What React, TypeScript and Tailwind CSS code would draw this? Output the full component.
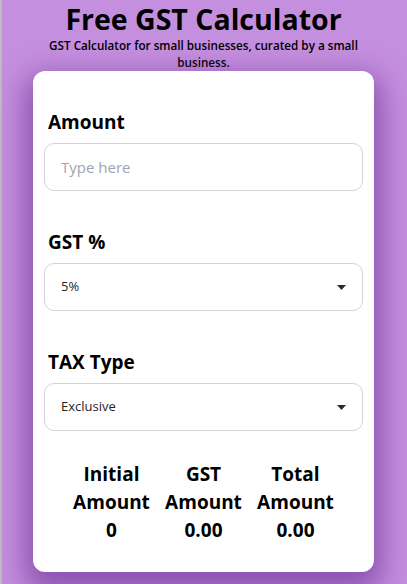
import { useState } from 'react';

// ── Small pieces ─────────────────────────────────────────────────────────────

function Caret() {
    return (
        <svg width="9" height="5" viewBox="0 0 9 5" className="flex-shrink-0">
            <path d="M0 0h9L4.5 5z" fill="#2b2b33" />
        </svg>
    );
}

function Field({ label, children }: { label: string; children: React.ReactNode }) {
    return (
        <div className="flex flex-col">
            <label className="pl-1 text-[19px] font-bold leading-[28px] text-black">{label}</label>
            <div className="mt-[7px]">{children}</div>
        </div>
    );
}

function SelectBox({ value }: { value: string }) {
    return (
        <div className="flex h-[48px] items-center justify-between rounded-[10px] border border-[#d4d4d8] pl-[16px] pr-[16px] text-[13px] text-[#1f1f1f]">
            <span>{value}</span>
            <Caret />
        </div>
    );
}

function Result({ top, value }: { top: string; value: string }) {
    return (
        <div className="flex flex-col items-center text-[19px] font-bold leading-[28px] text-black">
            <span>{top}</span>
            <span>Amount</span>
            <span>{value}</span>
        </div>
    );
}

// ── Page ─────────────────────────────────────────────────────────────────────

export default function App() {
    const [amount, setAmount] = useState('');

    return (
        <div
            className="flex min-h-[584px] flex-col items-center bg-[#c58fdf] pb-[14px] shadow-[inset_2px_0_0_#bdbdbd]"
            style={{ fontFamily: '"Open Sans", "Noto Sans", sans-serif' }}
        >
            <h1 className="mt-[1px] text-[28.5px] font-bold leading-[36px] text-black">Free GST Calculator</h1>
            <p className="w-[330px] text-center text-[11.7px] font-semibold leading-[17px] text-black">
                GST Calculator for small businesses, curated by a small business.
            </p>

            <div className="flex w-[341px] flex-col rounded-[12px] bg-white px-[11px] pt-[37px] pb-[28px] shadow-[0_12px_28px_8px_rgba(105,45,145,0.62)]">
                <div className="flex flex-col gap-[37px]">
                    <Field label="Amount">
                        <input
                            value={amount}
                            onChange={e => setAmount(e.target.value)}
                            placeholder="Type here"
                            className="h-[48px] w-full rounded-[10px] border border-[#d4d4d8] px-[16px] text-[15px] text-black outline-none placeholder:text-[#9fa3b3]"
                        />
                    </Field>
                    <Field label="GST %">
                        <SelectBox value="5%" />
                    </Field>
                    <Field label="TAX Type">
                        <SelectBox value="Exclusive" />
                    </Field>
                </div>

                <div className="mt-[29px] flex justify-center gap-[3px]">
                    <div className="w-[89px]"><Result top="Initial" value="0" /></div>
                    <div className="w-[89px]"><Result top="GST" value="0.00" /></div>
                    <div className="w-[89px]"><Result top="Total" value="0.00" /></div>
                </div>
            </div>
        </div>
    );
}
